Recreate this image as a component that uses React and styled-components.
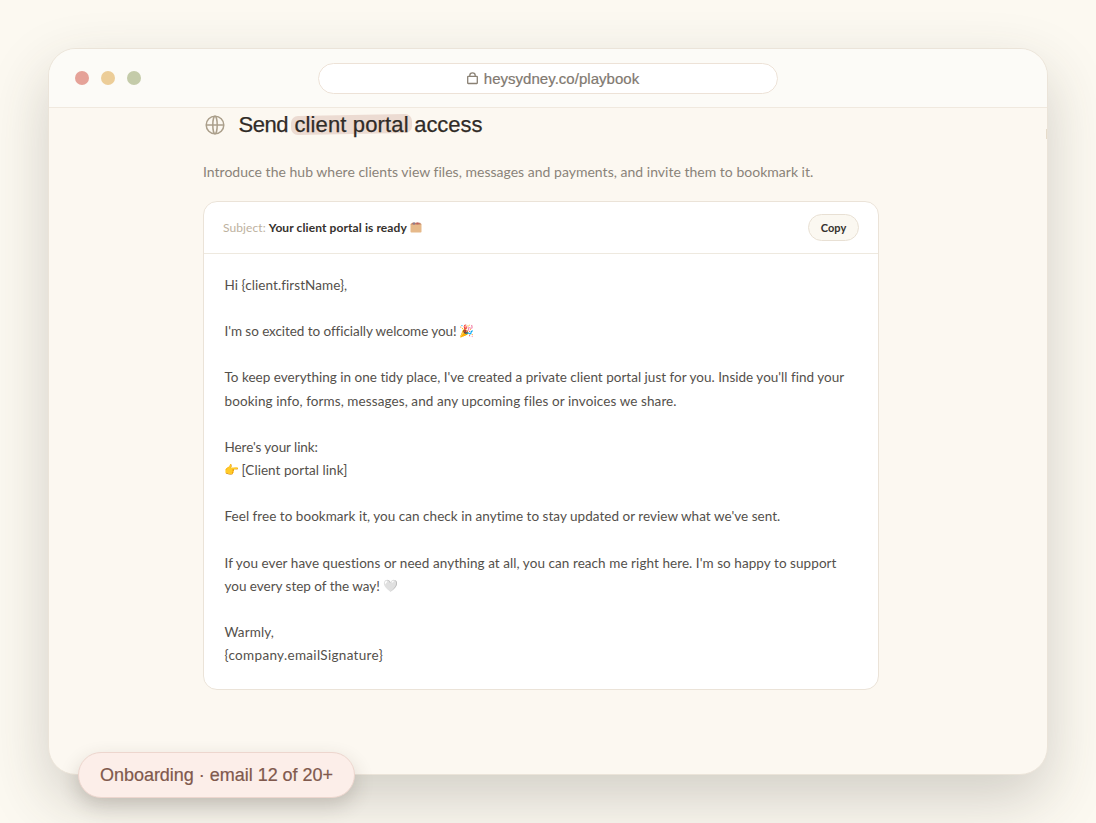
import styled, { createGlobalStyle } from "styled-components";

const LINES = [
  { text: "Hi {client.firstName},", spacing: 0.064 },
  {},
  { text: "I'm so excited to officially welcome you!", spacing: -0.06, after: "🎉" },
  {},
  {
    text: "To keep everything in one tidy place, I've created a private client portal just for you. Inside you'll find your",
    spacing: 0.012,
  },
  { text: "booking info, forms, messages, and any upcoming files or invoices we share.", spacing: 0.095 },
  {},
  { text: "Here's your link:", spacing: -0.07 },
  { before: "👉", text: "[Client portal link]", spacing: 0.045 },
  {},
  {
    text: "Feel free to bookmark it, you can check in anytime to stay updated or review what we've sent.",
    spacing: 0.032,
  },
  {},
  {
    text: "If you ever have questions or need anything at all, you can reach me right here. I'm so happy to support",
    spacing: 0.064,
  },
  { text: "you every step of the way!", spacing: -0.02, after: "🤍" },
  {},
  { text: "Warmly,", spacing: 0.13 },
  { text: "{company.emailSignature}", spacing: 0.32 },
];

export default function App() {
  return (
    <>
      <GlobalStyle />
      <Stage>
        <Browser>
          <TopBar>
            <Dots>
              <Dot $color="#e5a298" />
              <Dot $color="#eccd98" />
              <Dot $color="#c4cba9" />
            </Dots>
            <Address>
              <LockIcon />
              heysydney.co/playbook
            </Address>
          </TopBar>
          <Content>
            <TitleRow>
              <GlobeIcon />
              <Title>
                <Word $spacing={-0.5}>Send</Word>
                <Highlight>client portal</Highlight>
                <Word $spacing={-0.04}>access</Word>
              </Title>
            </TitleRow>
            <Intro>
              Introduce the hub where clients view files, messages and payments, and invite them to bookmark it.
            </Intro>
            <Card>
              <CardHeader>
                <Subject>
                  <span>Subject:</span>
                  <strong>Your client portal is ready</strong>
                  <BoxIcon />
                </Subject>
                <CopyButton>Copy</CopyButton>
              </CardHeader>
              <Message>
                {LINES.map((line, i) => (
                  <Line key={i} $spacing={line.spacing}>
                    {line.before && <Emoji>{line.before}</Emoji>}
                    {line.text && <span>{line.text}</span>}
                    {line.after && <Emoji>{line.after}</Emoji>}
                  </Line>
                ))}
              </Message>
            </Card>
          </Content>
          <EdgeTab />
        </Browser>
        <Badge>Onboarding · email 12 of 20+</Badge>
      </Stage>
    </>
  );
}

function LockIcon() {
  return (
    <svg width="11" height="13" viewBox="0 0 11 13" fill="none" stroke="#8a8174" strokeWidth="1.3">
      <rect x="0.7" y="4.3" width="9.6" height="7.2" rx="0.5" />
      <path d="M2.8 4.3V3.4a2.7 2.5 0 0 1 5.4 0v.9" />
    </svg>
  );
}

function GlobeIcon() {
  return (
    <svg width="20" height="20" viewBox="0 0 20 20" fill="none" stroke="#ab9f8b" strokeWidth="1.5">
      <circle cx="10" cy="10" r="8.8" />
      <ellipse cx="10" cy="10" rx="2.2" ry="8.8" />
      <path d="M1.2 10h17.6" />
    </svg>
  );
}

function BoxIcon() {
  return (
    <svg width="12" height="11" viewBox="0 0 12 11">
      <rect x="0.5" y="1.5" width="11" height="9" rx="0.8" fill="#e6b98a" />
      <path d="M1 2.5 2 .8h8.2l.8 1.7Z" fill="#bd7f69" />
      <path d="M3 .6h2v1.8H3Z" fill="#8a7d91" />
      <path d="M6.5.5h2v1.8h-2Z" fill="#c45f5b" />
    </svg>
  );
}

const GlobalStyle = createGlobalStyle`
  * {
    box-sizing: border-box;
  }

  body {
    margin: 0;
    background: #fcf9f1;
    font-family: "Liberation Sans", Arial, sans-serif;
  }
`;

const Stage = styled.main`
  position: relative;
  width: 1096px;
  height: 823px;
  padding: 48px 48px 0;
  overflow: hidden;
`;

const Browser = styled.section`
  position: relative;
  width: 1000px;
  height: 727px;
  border: 1px solid #ebe4d9;
  border-radius: 28px;
  background: #fcf8f1;
  box-shadow: 0 24px 60px rgba(60, 55, 45, 0.22);
  overflow: hidden;
`;

const TopBar = styled.header`
  display: grid;
  grid-template-columns: 1fr 460px 1fr;
  align-items: center;
  height: 59px;
  padding: 0 26px;
  border-bottom: 1px solid #f0e9df;
  background: #fcfbf7;
`;

const Dots = styled.div`
  display: flex;
  gap: 12px;
`;

const Dot = styled.i`
  width: 14px;
  height: 14px;
  border-radius: 50%;
  background: ${({ $color }) => $color};
`;

const Address = styled.div`
  display: flex;
  align-items: center;
  justify-content: center;
  gap: 6px;
  height: 31px;
  padding-left: 10px;
  border: 1px solid #ede2d7;
  border-radius: 16px;
  background: #fff;
  color: #817970;
  font-size: 15px;
  letter-spacing: 0.03px;
  -webkit-text-stroke: 0.2px #817970;
`;

const Content = styled.div`
  width: 676px;
  margin-left: 154px;
`;

const TitleRow = styled.div`
  display: flex;
  align-items: center;
  gap: 13.5px;
  height: 34px;
  padding-left: 2px;
`;

const Title = styled.h1`
  display: flex;
  align-items: center;
  margin: 0;
  color: #302b27;
  font-size: 22px;
  font-weight: 400;
  line-height: 24px;
  -webkit-text-stroke: 0.25px #302b27;
`;

const Word = styled.span`
  letter-spacing: ${({ $spacing }) => $spacing}px;
`;

const Highlight = styled.span`
  position: relative;
  z-index: 0;
  margin: 0 2.5px 0 3px;
  padding: 0 3px 0 3.5px;
  letter-spacing: 0.14px;

  &::before {
    content: "";
    position: absolute;
    inset: 2px 0 3px;
    z-index: -1;
    border-radius: 7px;
    background: #ecdbd2;
    transform: skewY(-1deg);
  }
`;

const Intro = styled.p`
  margin: 19px 0;
  color: #8a8379;
  font: 14px/21px Lato, sans-serif;
  letter-spacing: 0.015px;
`;

const Card = styled.article`
  height: 489px;
  border: 1px solid #ebe3d8;
  border-radius: 14px;
  background: #fff;
  font-family: Lato, sans-serif;
  overflow: hidden;
`;

const CardHeader = styled.div`
  display: flex;
  align-items: center;
  justify-content: space-between;
  height: 52px;
  padding: 0 19px;
  border-bottom: 1.5px solid #eee9df;
`;

const Subject = styled.div`
  display: flex;
  align-items: center;
  gap: 3px;
  color: #bdb19e;
  font-size: 12px;
  letter-spacing: 0.1px;

  strong {
    color: #35312d;
  }
`;

const CopyButton = styled.button`
  width: 51px;
  height: 27px;
  padding: 0;
  border: 1px solid #e8e0d4;
  border-radius: 14px;
  background: #fbf8f1;
  color: #35312d;
  font: 700 11px Lato, sans-serif;
`;

const Message = styled.div`
  padding: 19.3px 20.5px;
  color: #54504b;
  font-size: 13.5px;
`;

const Line = styled.div`
  display: flex;
  align-items: center;
  gap: 3px;
  height: 23.15px;
  letter-spacing: ${({ $spacing = 0 }) => $spacing}px;
  white-space: nowrap;
`;

const Emoji = styled.span`
  width: 14px;
  font: 12px/14px "Noto Color Emoji", sans-serif;
  letter-spacing: 0;
`;

/* sliver of a control clipped by the right edge of the window */
const EdgeTab = styled.i`
  position: absolute;
  top: 80px;
  right: 0;
  width: 1px;
  height: 10px;
  background: #e6dccb;
`;

const Badge = styled.div`
  position: absolute;
  left: 78px;
  top: 752px;
  display: flex;
  align-items: center;
  justify-content: center;
  width: 277px;
  height: 46px;
  padding-top: 1px;
  border: 1px solid #edd6ce;
  border-radius: 23px;
  background: #fceee9;
  box-shadow: 0 8px 20px rgba(60, 50, 40, 0.2);
  color: #80594d;
  font-size: 18px;
  letter-spacing: -0.02px;
  -webkit-text-stroke: 0.2px #80594d;
`;
